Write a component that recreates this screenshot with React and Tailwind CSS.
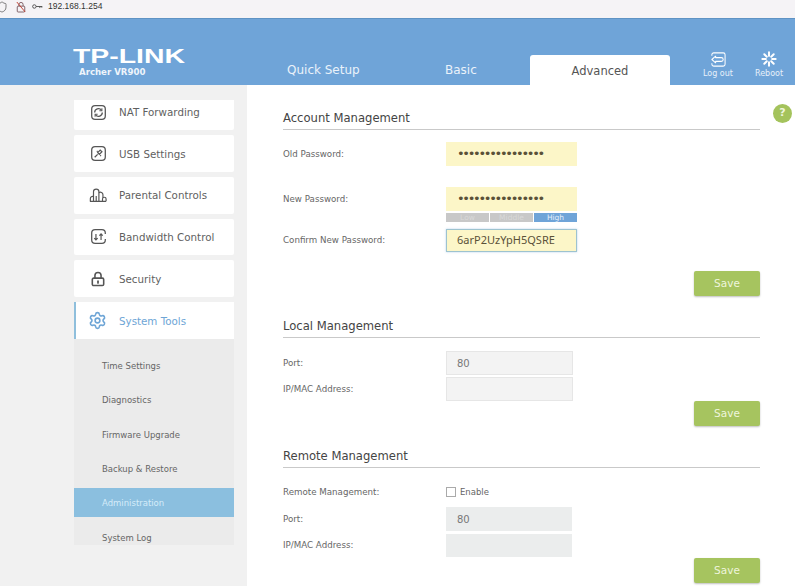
import React from 'react';
import { Shield, Settings } from 'lucide-react';

const font = "font-['DejaVu_Sans',Verdana,sans-serif]";

function NatIcon() {
  return (
    <svg viewBox="0 0 20 20" className="w-[17px] h-[17px]" fill="none" stroke="#555" strokeWidth="1.5">
      <path d="M6 2h8a4 4 0 0 1 4 4v8a4 4 0 0 1-4 4H6a4 4 0 0 1-4-4V6a4 4 0 0 1 4-4z" />
      <path d="M5.500 10a4.500 4.500 0 0 1 8-2.800M14.500 10a4.500 4.500 0 0 1-8 2.800" />
      <path d="M14 5v3h-3M6 15v-3h3" strokeWidth="1.200" />
    </svg>
  );
}

function UsbIcon() {
  return (
    <svg viewBox="0 0 20 20" className="w-[17px] h-[17px]" fill="none" stroke="#555" strokeWidth="1.5">
      <path d="M6 2h8a4 4 0 0 1 4 4v8a4 4 0 0 1-4 4H6a4 4 0 0 1-4-4V6a4 4 0 0 1 4-4z" />
      <path d="M5.500 14.500l3.500-3.500M9 9l2 2 3-3-2-2z" />
      <path d="M12 12l1 1M8 7l1 1" strokeWidth="1.200" />
    </svg>
  );
}

function ParentalIcon() {
  return (
    <svg viewBox="0 0 20 20" className="w-[18px] h-[18px]" fill="none" stroke="#555" strokeWidth="1.300">
      <path d="M1.500 17v-3a2.500 2.500 0 0 1 3.500-2.300" />
      <path d="M5 17V6.500a3 3 0 0 1 6 0V17" />
      <path d="M11 7.500a2.800 2.800 0 0 1 4.500 2.200V13" />
      <path d="M1 17h18M8 11v6M15 17v-2.500a2 2 0 0 1 4 0V17" />
    </svg>
  );
}

function BandwidthIcon() {
  return (
    <svg viewBox="0 0 20 20" className="w-[17px] h-[17px]" fill="none" stroke="#555" strokeWidth="1.5">
      <path d="M18 7V6a4 4 0 0 0-4-4H6a4 4 0 0 0-4 4v8a4 4 0 0 0 4 4h8a4 4 0 0 0 4-4v-1" />
      <path d="M7 7v7M5 12l2 2 2-2M13 14V7M11 9l2-2 2 2" strokeWidth="1.400" />
    </svg>
  );
}

function SecurityIcon() {
  return (
    <svg viewBox="0 0 16 18" className="w-[14px] h-[16px]" fill="none" stroke="#555" strokeWidth="1.800">
      <path d="M4.500 8V5a3.500 3.500 0 0 1 7 0v3" />
      <rect x="1.500" y="8" width="13" height="8.500" rx="1.500" />
      <path d="M8 11.500v2" strokeWidth="2" strokeLinecap="round" />
    </svg>
  );
}

function LogoutIcon() {
  return (
    <svg viewBox="0 0 18 18" className="w-[18px] h-[17px]" fill="none" stroke="#fff" strokeWidth="1.100">
      <path d="M2.500 5V4a2 2 0 0 1 2-2h10a2 2 0 0 1 2 2v10a2 2 0 0 1-2 2h-10a2 2 0 0 1-2-2v-1" />
      <path d="M2.500 9l4-3.500V7h6a2 2 0 0 1 0 4h-6v1.500z" strokeLinejoin="round" />
    </svg>
  );
}

function RebootIcon() {
  return (
    <svg viewBox="0 0 18 18" className="w-[16px] h-[16px]" stroke="#fff" strokeWidth="2.200" strokeLinecap="round">
      <path d="M9 1.500v4M9 12.500v4M1.500 9h4M12.500 9h4M3.700 3.700l2.800 2.800M11.500 11.500l2.800 2.800M14.300 3.700l-2.800 2.800M6.500 11.500l-2.800 2.800" />
    </svg>
  );
}

function CrossedLock() {
  return (
    <svg viewBox="0 0 12 14" className="w-[10px] h-[12px]" fill="none" stroke="#7a5a60" strokeWidth="1.100">
      <path d="M3.500 6V4a2.500 2.500 0 0 1 5 0v2" />
      <rect x="1.500" y="6" width="9" height="7" rx="1" />
      <path d="M1 1l10 12" stroke="#c0392b" />
    </svg>
  );
}

function KeyGlyph() {
  return (
    <svg viewBox="0 0 14 8" className="w-[11px] h-[7px]" fill="none" stroke="#444" strokeWidth="1.100">
      <circle cx="3" cy="4" r="2.200" />
      <path d="M5.200 4H13M10 4v2M12.500 4v1.500" />
    </svg>
  );
}

const menu = [
  { label: 'USB Settings', icon: <UsbIcon /> },
  { label: 'Parental Controls', icon: <ParentalIcon /> },
  { label: 'Bandwidth Control', icon: <BandwidthIcon /> },
  { label: 'Security', icon: <SecurityIcon /> },
];

const subMenu = ['Time Settings', 'Diagnostics', 'Firmware Upgrade', 'Backup & Restore', 'Administration', 'System Log'];

function Section({ title, className = '' }) {
  return (
    <div className={`h-[21px] pt-[1px] border-b border-[#c9c9c9] text-[11.6px] leading-[17px] text-[#444] ${className}`}>{title}</div>
  );
}

function Row({ label, className = '', children }) {
  return (
    <div className={`flex items-center ${className}`}>
      <div className="w-[163px] pt-[1px] text-[8.7px] text-[#666]">{label}</div>
      {children}
    </div>
  );
}

function Dots() {
  return <span className="text-[13px] tracking-[-2.3px] text-[#5a5138]">••••••••••••••••</span>;
}

function Save({ className = '' }) {
  return (
    <div className={`flex justify-end ${className}`}>
      <div className="w-[66px] h-[25px] flex items-center justify-center rounded-[2px] bg-[#a6c45f] text-[10.5px] text-[#eef5dc] shadow-[0_1px_2px_rgba(0,0,0,0.25)]">
        Save
      </div>
    </div>
  );
}

export default function App() {
  return (
    <div className={`${font} w-[795px] h-[586px] overflow-hidden bg-white flex flex-col`}>
      {/* browser bar */}
      <div className="h-[18px] bg-[#f5f3f6] flex items-center -ml-[4px] pb-[5px] shrink-0">
        <Shield className="w-[12px] h-[12px] text-[#555]" strokeWidth={1.5} />
        <div className="ml-[8px]"><CrossedLock /></div>
        <div className="ml-[6px]"><KeyGlyph /></div>
        <span className="ml-[5px] font-['Liberation_Sans',sans-serif] text-[8.5px] text-[#333]">192.168.1.254</span>
      </div>

      {/* header */}
      <div className="h-[67px] shrink-0 bg-[#6fa4d8] border-t border-[#5f93c4] flex">
        <div className="w-[247px] pl-[73px] pt-[27px] text-white">
          <div className="font-['Liberation_Sans',sans-serif] font-bold text-[20px] leading-[20px] scale-x-[1.42] origin-left">TP-LINK</div>
          <div className="ml-[6px] mt-[1px] text-[8.6px] font-bold leading-[11px] text-[#eef4fb]">Archer VR900</div>
        </div>
        <div className="flex-1 flex items-end">
          <div className="w-[152px] pl-[41px] pb-[6px] text-[12px] text-[#eaf2fa]">Quick Setup</div>
          <div className="w-[132px] pl-[47px] pb-[6px] text-[12px] text-[#eaf2fa]">Basic</div>
          <div className="w-[140px] h-[30px] pt-[3px] rounded-t-[3px] bg-white flex items-center justify-center text-[11.5px] text-[#555]">Advanced</div>
          <div className="w-[48px] ml-[24px] pb-[5px] flex flex-col items-center text-[8px] text-[#e6f0fa]">
            <LogoutIcon />
            Log out
          </div>
          <div className="w-[52px] ml-[1px] pb-[5px] flex flex-col items-center text-[8px] text-[#e6f0fa] gap-[1px]">
            <RebootIcon />
            Reboot
          </div>
        </div>
      </div>

      <div className="flex flex-1 min-h-0">
        {/* sidebar */}
        <div className="w-[247px] shrink-0 bg-[#f1f1f1] pl-[74px] pr-[13px] pt-[15px]">
          <div className="h-[30px] bg-white flex items-center pb-[6px] rounded-b-[2px]">
            <div className="w-[45px] flex justify-center pl-[3px]"><NatIcon /></div>
            <span className="pt-[2px] text-[10.3px] text-[#5f5f5f]">NAT Forwarding</span>
          </div>
          <div className="flex flex-col gap-[5px] mt-[5px]">
            {menu.map(item => (
              <div key={item.label} className="h-[36.75px] bg-white rounded-[2px] flex items-center">
                <div className="w-[45px] flex justify-center pl-[3px]">{item.icon}</div>
                <span className="pt-[2px] text-[10.3px] text-[#5f5f5f]">{item.label}</span>
              </div>
            ))}
          </div>
          <div className="h-[37px] mt-[5px] bg-white border-l-2 border-[#8fbfdc] flex items-center">
            <div className="w-[43px] flex justify-center"><Settings className="w-[19px] h-[19px] text-[#6ea5d6]" strokeWidth={2} /></div>
            <span className="pt-[2px] text-[10.3px] text-[#6ea5d6]">System Tools</span>
          </div>
          <div className="h-[206px] overflow-hidden bg-[#ebebeb] pt-[9px]">
            {subMenu.map(name => (
              <div key={name} className="h-[34.4px] flex items-center">
                <div className={`w-full h-[29px] pt-[2px] flex items-center pl-[28px] text-[8.5px] ${name === 'Administration' ? 'bg-[#8bbfdf] text-[#d5ecf9]' : 'text-[#666]'}`}>
                  {name}
                </div>
              </div>
            ))}
          </div>
        </div>

        {/* main content */}
        <div className="relative flex-1 pl-[36px] pr-[35px] pt-[24px]">
          <div className="absolute top-[19px] right-[3px] w-[19px] h-[19px] rounded-full bg-[#a4c35c] flex items-center justify-center text-[11px] font-bold text-[#eef5dc]">?</div>

          <Section title="Account Management" />
          <Row label="Old Password:" className="mt-[12px]">
            <div className="w-[131px] h-[24px] bg-[#fcf6c8] pl-[11px] flex items-center"><Dots /></div>
          </Row>
          <Row label="New Password:" className="mt-[21px]">
            <div className="w-[131px] h-[24px] bg-[#fcf6c8] pl-[11px] flex items-center"><Dots /></div>
          </Row>
          <div className="ml-[163px] mt-[2px] w-[131px] h-[9px] flex gap-[1px] text-[7.5px] leading-[9px] text-center">
            <div className="flex-1 bg-[#c8c8c8] text-[#d8d8d8]">Low</div>
            <div className="flex-1 bg-[#c8c8c8] text-[#d8d8d8]">Middle</div>
            <div className="flex-1 bg-[#6fa4d8] text-[#e6f0fa]">High</div>
          </div>
          <Row label="Confirm New Password:" className="mt-[7px]">
            <div className="w-[131px] h-[23px] bg-[#fcf6c8] border border-[#9dc3cf] pl-[10px] flex items-center font-['Noto_Sans',sans-serif] text-[11px] text-[#5a5138] shadow-[0_0_2px_rgba(111,164,216,0.5)]">6arP2UzYpH5QSRE</div>
          </Row>
          <Save className="mt-[19px]" />

          <Section title="Local Management" className="mt-[21px]" />
          <Row label="Port:" className="mt-[13px]">
            <div className="w-[127px] h-[24px] bg-[#f3f3f3] border border-[#e6e6e6] pl-[10px] flex items-center text-[10px] text-[#777]">80</div>
          </Row>
          <Row label="IP/MAC Address:" className="mt-[2px]">
            <div className="w-[127px] h-[24px] bg-[#f3f3f3] border border-[#e6e6e6]" />
          </Row>
          <Save />

          <Section title="Remote Management" className="mt-[21px]" />
          <Row label="Remote Management:" className="mt-[17px] h-[14px]">
            <div className="w-[10px] h-[10px] border border-[#aaa] bg-white" />
            <span className="ml-[4px] text-[8.5px] text-[#666]">Enable</span>
          </Row>
          <Row label="Port:" className="mt-[8px]">
            <div className="w-[126px] h-[24px] bg-[#ebeded] pl-[11px] flex items-center text-[10px] text-[#777]">80</div>
          </Row>
          <Row label="IP/MAC Address:" className="mt-[3px]">
            <div className="w-[126px] h-[23px] bg-[#ebeded]" />
          </Row>
          <Save className="mt-[1px]" />
        </div>
      </div>
    </div>
  );
}
